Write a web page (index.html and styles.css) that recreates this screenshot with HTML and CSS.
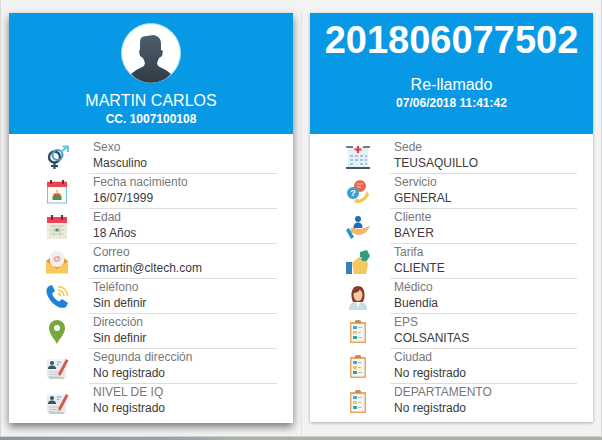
FILE: index.html
```html
<!DOCTYPE html>
<html lang="es">
<head>
<meta charset="utf-8">
<title>Paciente</title>
<link rel="stylesheet" href="styles.css">
</head>
<body>
<svg class="defs" width="0" height="0" aria-hidden="true">
  <defs>
    <g id="form">
      <path d="M3 5h16l3 2v17l-3 1H5l-2-2z" fill="#e8eced"/>
      <path d="M4 22l16 1v2H6z" fill="#c6cbcd"/>
      <path d="M4 5h17v2H4z" fill="#f3f4f4"/>
      <circle cx="8" cy="9" r="2" fill="#3a5568"/>
      <path d="M4 15c0-3 2-3.500 4-3.500s4 .5 4 3.500z" fill="#3a5568"/>
      <path d="M13 8h4M13 10.500h2" stroke="#5bb5c9" stroke-width="1.200"/>
      <path d="M5 18h10M5 20.500h8" stroke="#c4c8ca" stroke-width="1"/>
      <path d="M14 20l8-15 2.500 1.500L16.500 21.500 14 22.500z" fill="#d9564d"/>
      <path d="M14 20l.1 2.500 2.300-1z" fill="#e8c9a0"/>
    </g>
    <g id="clip">
      <rect x="5" y="3" width="16" height="21" fill="#e9a868"/>
      <rect x="6.500" y="5" width="13" height="17.500" fill="#f7f5ee"/>
      <path d="M10 4h6V2l-1.500-1h-3L10 2z" fill="#c98a52"/>
      <rect x="8" y="7" width="4" height="3" fill="#4ba6d6"/>
      <rect x="8" y="12" width="4" height="3" fill="#f3c757"/>
      <rect x="8" y="17" width="4" height="3" fill="#2fa59a"/>
      <path d="M13 8.500h4M13 13.500h3M13 18.500h4" stroke="#9fc4d6" stroke-width="1"/>
    </g>
    <linearGradient id="bust" x1="0" y1="0" x2="0" y2="1">
      <stop offset="0" stop-color="#4d5f6d"/>
      <stop offset="1" stop-color="#2f3b44"/>
    </linearGradient>
  </defs>
</svg>
<main class="board">
  <section class="card card-left">
    <header class="head head-person">
      <div class="avatar">
        <svg viewBox="0 0 60 60" width="60" height="60">
          <circle cx="30" cy="30" r="29.500" fill="#fff" stroke="#9bdcf7" stroke-width="1"/>
          <path d="M19 19Q19 13 25 13L33 12Q40 14 40 20L40 27 42 28 41 33 38 35 36 40 37 43Q44 46 50 51A27 27 0 0 1 10 51Q16 46 23 43L24 40 22 35 19 33 18 28 19 27Z" fill="url(#bust)"/>
        </svg>
      </div>
      <h1 class="name">MARTIN CARLOS</h1>
      <p class="doc">CC. 1007100108</p>
    </header>
    <ul class="rows">
      <li class="row">
        <span class="icon"><svg viewBox="0 0 26 26" width="26" height="26">
          <circle cx="10.500" cy="13" r="5.500" fill="none" stroke="#2d4a5e" stroke-width="2.400"/>
          <path d="M10.500 18v7M7 22h7" stroke="#2d4a5e" stroke-width="2.200"/>
          <circle cx="13.500" cy="11" r="5" fill="none" stroke="#4d9ec4" stroke-width="2.200"/>
          <path d="M17 8l6-5M18.500 2.500H24V8" fill="none" stroke="#6cc3e6" stroke-width="2.200"/>
        </svg></span>
        <div class="field"><span class="label">Sexo</span><span class="value">Masculino</span></div>
      </li>
      <li class="row">
        <span class="icon"><svg viewBox="0 0 26 26" width="26" height="26">
          <rect x="3.500" y="3" width="19" height="21" fill="#fbfaf3" stroke="#7cc2cf" stroke-width="1"/>
          <rect x="3" y="3" width="20" height="5" fill="#e8455a"/>
          <path d="M7 1v4M19 1v4" stroke="#7a2b36" stroke-width="2"/>
          <rect x="8.500" y="17" width="9" height="4" fill="#3f9a55"/>
          <rect x="9.500" y="14.500" width="7" height="3" fill="#c9573f"/>
          <rect x="12.400" y="11" width="1.400" height="3.500" fill="#e8b13f"/>
        </svg></span>
        <div class="field"><span class="label">Fecha nacimiento</span><span class="value">16/07/1999</span></div>
      </li>
      <li class="row">
        <span class="icon"><svg viewBox="0 0 26 26" width="26" height="26">
          <rect x="3" y="3" width="20" height="22" fill="#eeeadb"/>
          <rect x="3" y="3" width="20" height="6" fill="#e8455a"/>
          <path d="M8 1v5M18 1v5" stroke="#7a2b36" stroke-width="2.200"/>
          <path d="M6 12h14M6 16h14M6 20h14M10 11v11M16 11v11" stroke="#c5cdb8" stroke-width="1"/>
          <rect x="11.500" y="14.500" width="3" height="3" fill="#3f9a6a"/>
        </svg></span>
        <div class="field"><span class="label">Edad</span><span class="value">18 Años</span></div>
      </li>
      <li class="row">
        <span class="icon"><svg viewBox="0 0 26 26" width="26" height="26">
          <path d="M2 12l11-8 11 8v12H2z" fill="#e29a35"/>
          <rect x="6" y="2" width="14" height="16" rx="6" fill="#f2efe9"/>
          <text class="at" x="13" y="12">@</text>
          <path d="M2 12l11 8 11-8v12.500H2z" fill="#f9c75c"/>
        </svg></span>
        <div class="field"><span class="label">Correo</span><span class="value">cmartin@cltech.com</span></div>
      </li>
      <li class="row">
        <span class="icon"><svg viewBox="0 0 26 26" width="26" height="26">
          <path d="M5 2l3-1 3 6-3 2.500c1 3.500 3.500 6 7 8l3-2.500 6 4-2 4c-3 1.500-6 1-9.500-1C8 19 4 14.500 2.500 8.500 2 6 3 3.500 5 2z" fill="#1e84d8"/>
          <path d="M14 2.500a9.500 9.500 0 0 1 9.500 9.500M14 6a6 6 0 0 1 6 6M14 9.500a2.500 2.500 0 0 1 2.500 2.500" fill="none" stroke="#f1c34f" stroke-width="1.500"/>
        </svg></span>
        <div class="field"><span class="label">Teléfono</span><span class="value">Sin definir</span></div>
      </li>
      <li class="row">
        <span class="icon"><svg viewBox="0 0 26 26" width="26" height="26">
          <path d="M13 25C10 19 5 15 5 9a8 8 0 0 1 16 0c0 6-5 10-8 16z" fill="#76a83a"/>
          <circle cx="13" cy="9" r="3" fill="#fff"/>
        </svg></span>
        <div class="field"><span class="label">Dirección</span><span class="value">Sin definir</span></div>
      </li>
      <li class="row">
        <span class="icon"><svg viewBox="0 0 26 26" width="26" height="26"><use href="#form"/></svg></span>
        <div class="field"><span class="label">Segunda dirección</span><span class="value">No registrado</span></div>
      </li>
      <li class="row">
        <span class="icon"><svg viewBox="0 0 26 26" width="26" height="26"><use href="#form"/></svg></span>
        <div class="field"><span class="label">NIVEL DE IQ</span><span class="value">No registrado</span></div>
      </li>
    </ul>
  </section>
  <div class="divider"></div>
  <section class="card card-right">
    <header class="head head-case">
      <h2 class="number">201806077502</h2>
      <p class="status">Re-llamado</p>
      <p class="date">07/06/2018 11:41:42</p>
    </header>
    <ul class="rows">
      <li class="row">
        <span class="icon"><svg viewBox="0 0 26 26" width="26" height="26">
          <rect x="3" y="3" width="20" height="20" fill="#e6f1f5"/>
          <path d="M1 3h7M18 3h7" stroke="#46555e" stroke-width="1.500"/>
          <rect x="1" y="23" width="24" height="2" fill="#46555e"/>
          <path d="M13 2v7M9.500 5.500h7" stroke="#e23b47" stroke-width="2.200"/>
          <path d="M5 12h3M10 12h3M15 12h3M20 12h2M5 16h3M10 16h3M15 16h3M20 16h2M5 20h3M15 20h3M20 20h2" stroke="#9cc8da" stroke-width="2"/>
        </svg></span>
        <div class="field"><span class="label">Sede</span><span class="value">TEUSAQUILLO</span></div>
      </li>
      <li class="row">
        <span class="icon"><svg viewBox="0 0 26 26" width="26" height="26">
          <circle cx="15" cy="7" r="6" fill="#e8694f"/>
          <path d="M12 5h6M12 8h4" stroke="#f6c0ae" stroke-width="1.200"/>
          <circle cx="8" cy="14" r="6" fill="#3d9fd4"/>
          <text class="mark" x="8" y="17">?</text>
          <path d="M9 23c5 2.500 11 0 15-7l-1.500-4-2 3c-1.500 4-4.500 5.500-7.500 5.500l-2-1z" fill="#f1c84b"/>
        </svg></span>
        <div class="field"><span class="label">Servicio</span><span class="value">GENERAL</span></div>
      </li>
      <li class="row">
        <span class="icon"><svg viewBox="0 0 26 26" width="26" height="26">
          <circle cx="13" cy="5" r="3" fill="#1f6fb5"/>
          <path d="M8.500 14c0-4 2-5.500 4.500-5.500s4.500 1.500 4.500 5.500z" fill="#1f6fb5"/>
          <path d="M6 14c3-1 5 1 8 1 4 0 7-2 11-3-2 5-6 9-11 9-3 0-5-2-8-3z" fill="#f4b46a"/>
          <path d="M1 16l3-2 5 9-3 2z" fill="#2e90c8"/>
        </svg></span>
        <div class="field"><span class="label">Cliente</span><span class="value">BAYER</span></div>
      </li>
      <li class="row">
        <span class="icon"><svg viewBox="0 0 26 26" width="26" height="26">
          <path d="M15 3l7-2 3 6-4 6-6-2z" fill="#2f9e7e"/>
          <path d="M7 14l7-6 3 0-1 4h6l1 3-2 10H9z" fill="#f7c75f"/>
          <rect x="1" y="13" width="6" height="12" fill="#2e84b8"/>
        </svg></span>
        <div class="field"><span class="label">Tarifa</span><span class="value">CLIENTE</span></div>
      </li>
      <li class="row">
        <span class="icon"><svg viewBox="0 0 26 26" width="26" height="26">
          <path d="M4 26c0-6 3-8 9-8s9 2 9 8z" fill="#c8dbe6"/>
          <path d="M11 18l2 6 2-6z" fill="#fff"/>
          <path d="M8 18C5 12 6 2 13 2s8 10 5 16z" fill="#8c3a2c"/>
          <ellipse cx="13" cy="11" rx="4.500" ry="6" fill="#f3c9a8"/>
          <path d="M8 9c3 0 6-1 7-4 1 2 2 3 3 4l-1-6H9z" fill="#8c3a2c"/>
        </svg></span>
        <div class="field"><span class="label">Médico</span><span class="value">Buendia</span></div>
      </li>
      <li class="row">
        <span class="icon"><svg viewBox="0 0 26 26" width="26" height="26"><use href="#clip"/></svg></span>
        <div class="field"><span class="label">EPS</span><span class="value">COLSANITAS</span></div>
      </li>
      <li class="row">
        <span class="icon"><svg viewBox="0 0 26 26" width="26" height="26"><use href="#clip"/></svg></span>
        <div class="field"><span class="label">Ciudad</span><span class="value">No registrado</span></div>
      </li>
      <li class="row">
        <span class="icon"><svg viewBox="0 0 26 26" width="26" height="26"><use href="#clip"/></svg></span>
        <div class="field"><span class="label">DEPARTAMENTO</span><span class="value">No registrado</span></div>
      </li>
    </ul>
  </section>
</main>
<div class="strip"></div>
</body>
</html>
```
FILE: styles.css
```css
* { box-sizing: border-box; }
html, body { margin: 0; padding: 0; }
body {
  width: 602px;
  height: 440px;
  overflow: hidden;
  background: #f3f3f3;
  font-family: "Liberation Sans", Arial, sans-serif;
}
.defs { position: absolute; }
.board {
  display: flex;
  gap: 8px;
  height: 437px;
  padding: 13px 8px 0;
  align-items: flex-start;
  border-left: 1px solid #d9d9d9;
  border-right: 1px solid #d9d9d9;
  border-bottom: 1px solid #d0d0d0;
}
.strip {
  height: 3px;
  background: linear-gradient(90deg, #8a97a3 0, #9aa5ad 190px, #a7b5a0 230px, #a7b5a0 100%);
}
.divider {
  width: 1px;
  height: 424px;
  flex: none;
  background: #e2e2e2;
}
.card {
  background: #fff;
  flex: none;
}
.card-left { width: 284px; height: 410px; box-shadow: 0 4px 8px rgba(0,0,0,.5); }
.card-right { width: 283px; height: 409px; box-shadow: 0 1px 3px rgba(0,0,0,.3); }
.head {
  height: 121px;
  background: #0899e6;
  color: #fff;
  text-align: center;
}
.head-person { padding-top: 10px; }
.avatar { height: 60px; display: flex; justify-content: center; }
.name {
  margin: 8px 0 0;
  font-size: 16px;
  line-height: 20px;
  font-weight: 400;
}
.doc {
  margin: 1px 0 0;
  font-size: 12px;
  line-height: 14px;
  font-weight: 700;
}
.number {
  margin: 0;
  padding-top: 3px;
  font-size: 38px;
  line-height: 48px;
  font-weight: 700;
}
.status {
  margin: 11px 0 0;
  font-size: 16px;
  line-height: 20px;
}
.date {
  margin: 1px 0 0;
  font-size: 12px;
  line-height: 14px;
  font-weight: 700;
}
.rows {
  list-style: none;
  margin: 0;
  padding: 5px 16px 0 0;
}
.row {
  display: flex;
  height: 35px;
  align-items: center;
}
.icon {
  width: 80px;
  height: 30px;
  flex: none;
  display: flex;
  align-items: center;
  justify-content: center;
  padding-left: 16px;
}
.field {
  flex: 1;
  height: 35px;
  border-bottom: 1px solid #ddd;
  display: flex;
  flex-direction: column;
  font-size: 12px;
  line-height: 16px;
  padding-left: 4px;
}
.row:last-child .field { border-bottom: 0; }
.label { color: #777; }
.value { color: #3a3a3a; }
.mark { font: 700 9px "Liberation Sans", sans-serif; fill: #fff; text-anchor: middle; }
.at { font: 400 8px "Liberation Sans", sans-serif; fill: #e27a6e; text-anchor: middle; }
```
